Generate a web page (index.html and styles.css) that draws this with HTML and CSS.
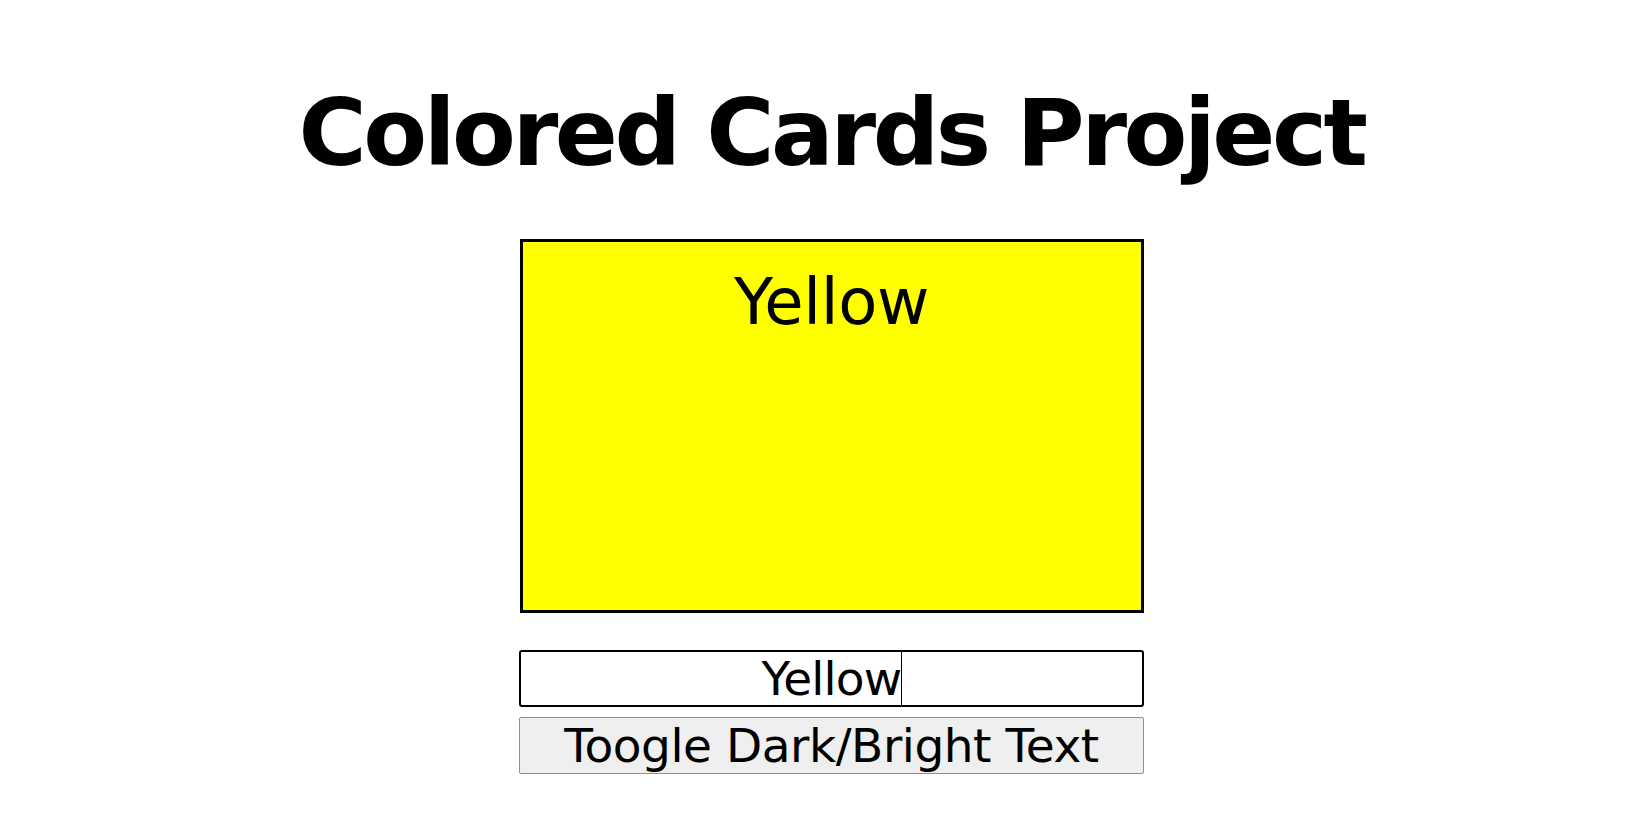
FILE: index.html
```html
<!DOCTYPE html>
<html>
<head>
<meta charset="utf-8">
<title>Colored Cards Project</title>
<link rel="stylesheet" href="styles.css">
</head>
<body>
<div class="page">
  <h1 class="title">Colored Cards Project</h1>
  <div class="card">
    <div class="card-label">Yellow</div>
  </div>
  <div class="controls">
    <div class="color-input"><span class="input-text">Yellow</span></div>
    <button class="toggle-btn" type="button">Toogle Dark/Bright Text</button>
  </div>
</div>
</body>
</html>
```
FILE: styles.css
```css
html, body {
  margin: 0;
  padding: 0;
  background: #ffffff;
}
.page {
  padding-left: 15px;
  display: flex;
  flex-direction: column;
  align-items: center;
  font-family: "DejaVu Sans", Verdana, sans-serif;
  color: #000;
}
.title {
  margin: 79px 0 0 0;
  font-size: 93px;
  line-height: 108px;
  font-weight: bold;
  letter-spacing: -3.5px;
  white-space: nowrap;
}
.card {
  margin-top: 52px;
  box-sizing: border-box;
  width: 624px;
  height: 374px;
  border: 3px solid #000;
  background: #ffff00;
  padding-top: 23px;
  text-align: center;
}
.card-label {
  font-size: 64px;
  line-height: 75px;
  letter-spacing: -0.3px;
}
.controls {
  margin-top: 37px;
  width: 625px;
  display: flex;
  flex-direction: column;
  gap: 10px;
}
.color-input {
  box-sizing: border-box;
  height: 57px;
  border: 2px solid #000;
  border-radius: 3px;
  background: #fff;
  display: flex;
  justify-content: center;
  font-size: 47px;
  line-height: 53px;
  letter-spacing: -0.8px;
}
.input-text {
  border-right: 1px solid #000;
  padding-left: 1px;
}
.toggle-btn {
  box-sizing: border-box;
  height: 57px;
  margin: 0;
  padding: 0;
  border: 1px solid #8f8f8f;
  border-radius: 2px;
  background: #efefef;
  color: #000;
  font-family: "DejaVu Sans", Verdana, sans-serif;
  font-size: 47px;
  line-height: 53px;
  letter-spacing: -0.45px;
}
```
